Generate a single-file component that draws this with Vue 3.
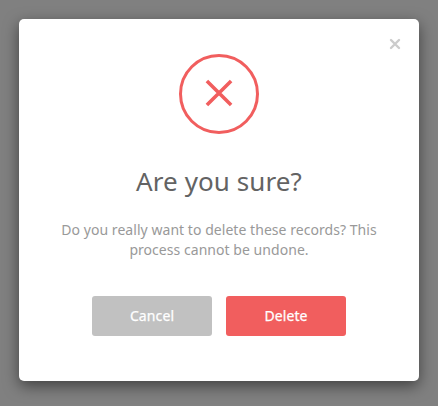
<script setup>
import { ref } from 'vue'

const title = ref('Are you sure?')
</script>

<template>
  <div class="backdrop">
    <section class="modal" role="dialog" aria-modal="true">
      <button class="close" type="button" aria-label="Close">
        <svg width="12" height="12" viewBox="0 0 12 12">
          <path d="M2 2L10 10M10 2L2 10" />
        </svg>
      </button>
      <div class="icon-box">
        <svg width="28" height="28" viewBox="0 0 28 28">
          <path d="M1.9 2L26.1 26M26.1 2L1.9 26" />
        </svg>
      </div>
      <h4 class="title">{{ title }}</h4>
      <p class="message">
        Do you really want to delete these records? This<br />
        process cannot be undone.
      </p>
      <div class="actions">
        <button class="btn cancel" type="button">Cancel</button>
        <button class="btn delete" type="button">Delete</button>
      </div>
    </section>
  </div>
</template>

<style>
body {
  margin: 0;
  background: #808080;
}
</style>

<style scoped>
.backdrop {
  box-sizing: border-box;
  height: 406px;
  padding: 19px;
  overflow: hidden;
  background: #808080;
  font-family: "Noto Sans", "Open Sans", sans-serif;
}
.modal {
  position: relative;
  box-sizing: border-box;
  display: flex;
  flex-direction: column;
  align-items: center;
  width: 400px;
  height: 362px;
  padding-top: 35px;
  border-radius: 5px;
  background: #fff;
  box-shadow: 0 5px 15px rgba(0, 0, 0, 0.5);
}
button {
  padding: 0;
  border: 0;
  font-family: inherit;
}
.close {
  position: absolute;
  top: 19px;
  right: 18px;
  display: flex;
  background: none;
}
.close path {
  fill: none;
  stroke: #ccc;
  stroke-width: 2.4;
  stroke-linecap: round;
}
.icon-box {
  box-sizing: border-box;
  display: flex;
  align-items: center;
  justify-content: center;
  width: 80px;
  height: 80px;
  padding-bottom: 2px;
  border: 3px solid #f15e5e;
  border-radius: 50%;
}
.icon-box path {
  fill: none;
  stroke: #f15e5e;
  stroke-width: 3.6;
}
.title {
  margin: 29px 0 0;
  color: #636363;
  font-size: 26px;
  font-weight: 400;
  line-height: 36px;
  letter-spacing: 0.08px;
  white-space: nowrap;
}
.message {
  margin: 21px 0 0;
  color: #999;
  font-size: 14px;
  line-height: 20px;
  letter-spacing: 0.045px;
  text-align: center;
  white-space: nowrap;
}
.actions {
  display: flex;
  gap: 14px;
  margin-top: 36px;
}
.btn {
  width: 120px;
  height: 40px;
  border-radius: 3px;
  color: #fff;
  font-size: 14px;
  line-height: 40px;
  letter-spacing: 0.1px;
  -webkit-text-stroke: 0.25px #fff;
}
.cancel {
  background: #c1c1c1;
}
.delete {
  background: #f15e5e;
}
</style>
